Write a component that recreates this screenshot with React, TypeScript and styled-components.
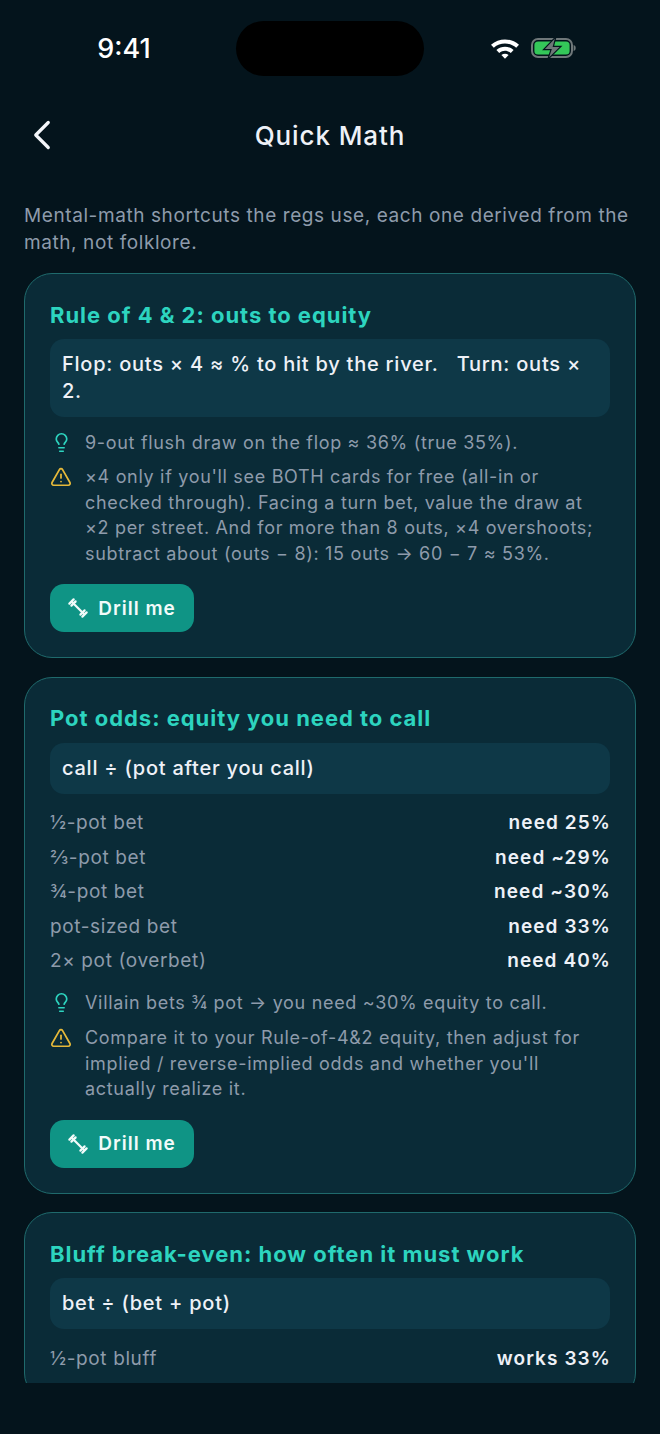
import {FunctionComponent} from 'react'
import styled, {createGlobalStyle} from 'styled-components'
import {ChevronLeft, Lightbulb, TriangleAlert} from 'lucide-react'

const GlobalStyle = createGlobalStyle`
    html, body {
        margin: 0;
        padding: 0;
        background: #03131b;
    }
`

const Screen = styled.div`
    width: 660px;
    height: 1434px;
    background: #04141c;
    font-family: Inter, "Noto Sans", sans-serif;
    overflow: hidden;
    display: flex;
    flex-direction: column;
`

const StatusBar = styled.div`
    height: 97px;
    flex-shrink: 0;
    position: relative;
    display: flex;
    align-items: flex-start;
`

const Time = styled.div`
    width: 248px;
    padding-top: 33px;
    text-align: center;
    color: #ffffff;
    font-size: 27px;
    line-height: 32px;
    font-weight: 500;
`

const Island = styled.div`
    position: absolute;
    left: 236px;
    top: 21px;
    width: 188px;
    height: 55px;
    border-radius: 28px;
    background: #000000;
`

const StatusIcons = styled.div`
    position: absolute;
    left: 490px;
    top: 36px;
    display: flex;
    align-items: center;
    gap: 11px;
`

const Header = styled.div`
    height: 78px;
    flex-shrink: 0;
    position: relative;
    display: flex;
    align-items: center;
    justify-content: center;
`

const BackButton = styled.div`
    position: absolute;
    left: 17px;
    top: 13px;
    color: #f4f6fa;
    display: flex;
`

const Title = styled.h1`
    margin: 0;
    color: #eef1f7;
    font-size: 26px;
    line-height: 32px;
    font-weight: 500;
    letter-spacing: 0.9px;
`

const Scroller = styled.div`
    height: 1208px;
    flex-shrink: 0;
    overflow: hidden;
    padding: 27px 24px 0;
    box-sizing: border-box;
`

const Intro = styled.p`
    margin: 0 0 17px;
    color: #8e9bab;
    font-size: 19px;
    line-height: 27px;
    letter-spacing: 0.59px;
`

const Card = styled.section`
    background: #0a2b37;
    border: 1.5px solid #1f6a6c;
    border-radius: 28px;
    padding: 24.5px 25px 25px;
    margin-bottom: 18.5px;
    box-sizing: border-box;
`

const CardTitle = styled.h2`
    margin: 0 0 8.5px;
    color: #2dd4bf;
    font-size: 22px;
    line-height: 32px;
    font-weight: 700;
    letter-spacing: 0.97px;
`

const Formula = styled.div`
    background: #0e3847;
    border-radius: 14px;
    padding: 12px;
    color: #eef1f7;
    font-size: 20px;
    line-height: 27px;
    font-weight: 500;
    letter-spacing: 0.76px;
    white-space: pre-wrap;
`

const Rows = styled.div`
    margin-top: 11.5px;
`

const Row = styled.div`
    height: 34.5px;
    display: flex;
    align-items: center;
    justify-content: space-between;
    font-size: 19px;
    letter-spacing: 0.62px;
`

const RowLabel = styled.span`
    color: #8e9bab;
`

const RowValue = styled.span`
    color: #eef1f7;
    font-weight: 600;
    letter-spacing: 1.1px;
    margin-right: -1px;
`

const Notes = styled.div`
    margin-top: 12.5px;
    display: flex;
    flex-direction: column;
    gap: 9px;
`

const Note = styled.div`
    display: flex;
    gap: 13px;
    color: #8e9bab;
    font-size: 18px;
    line-height: 25.6px;
    letter-spacing: 0.68px;
`

const NoteIcon = styled.span<{$color: string}>`
    width: 22px;
    height: 25px;
    flex-shrink: 0;
    color: ${p => p.$color};
    display: flex;
    align-items: center;
    justify-content: center;
`

const DrillButton = styled.button`
    margin-top: 18px;
    height: 48px;
    width: 144px;
    border: none;
    border-radius: 14px;
    background: #0f9485;
    color: #f2fbfa;
    font-family: inherit;
    font-size: 19px;
    font-weight: 600;
    letter-spacing: 1px;
    display: flex;
    align-items: center;
    justify-content: center;
    gap: 10px;
    padding: 0;
`

const WifiIcon: FunctionComponent = () => (
    <svg width="30" height="22" viewBox="0 0 30 22">
        <path d="M1 7.8 C9 0.6 21 0.6 29 7.8 L26.2 10.8 C19.8 5.2 10.2 5.2 3.8 10.8Z" fill="#fff"/>
        <path d="M6.4 13 C11.5 8.6 18.5 8.6 23.6 13 L20.8 16 C17.2 13 12.8 13 9.2 16Z" fill="#fff"/>
        <path d="M11.4 18 C13.5 16.3 16.5 16.3 18.6 18 L15 21.8Z" fill="#fff"/>
    </svg>
)

const BatteryIcon: FunctionComponent = () => (
    <svg width="46" height="24" viewBox="0 0 46 24">
        <rect x="1" y="3" width="40" height="18" rx="6" fill="none" stroke="#6f7779" strokeWidth="2"/>
        <rect x="3.4" y="5.4" width="35.2" height="13.2" rx="3.6" fill="#34c759"/>
        <path d="M42.6 9 C45.4 9.6 45.4 14.4 42.6 15Z" fill="#6f7779"/>
        <path d="M25 0.6 L12.5 13.6 L20 13.6 L16.8 23.4 L30 10.4 L22.4 10.4Z" fill="#6f7779" stroke="#04141c" strokeWidth="1.2"/>
    </svg>
)

const DrillIcon: FunctionComponent = () => (
    <svg width="20" height="20" viewBox="0 0 20 20" fill="none" stroke="#f2fbfa" strokeLinecap="round">
        <path d="M4 4 L16 16" strokeWidth="2.2"/>
        <path d="M5.6 1.4 L1.4 5.6" strokeWidth="2.2"/>
        <path d="M7.6 3.4 L3.4 7.6" strokeWidth="2.2"/>
        <path d="M16.6 12.4 L12.4 16.6" strokeWidth="2.2"/>
        <path d="M18.6 14.4 L14.4 18.6" strokeWidth="2.2"/>
    </svg>
)

const Tip: FunctionComponent<{text: string}> = ({text}) => (
    <Note>
        <NoteIcon $color="#2dd4bf"><Lightbulb size={21} strokeWidth={1.9}/></NoteIcon>
        <span>{text}</span>
    </Note>
)

const Warning: FunctionComponent<{text: string}> = ({text}) => (
    <Note>
        <NoteIcon $color="#e6b93a"><TriangleAlert size={22} strokeWidth={1.9}/></NoteIcon>
        <span>{text}</span>
    </Note>
)

const Drill: FunctionComponent = () => (
    <DrillButton>
        <DrillIcon/>
        Drill me
    </DrillButton>
)

const potOdds = [
    ['½-pot bet', 'need 25%'],
    ['⅔-pot bet', 'need ~29%'],
    ['¾-pot bet', 'need ~30%'],
    ['pot-sized bet', 'need 33%'],
    ['2× pot (overbet)', 'need 40%'],
]

const App: FunctionComponent = () => {
    return (
        <Screen>
            <GlobalStyle/>
            <StatusBar>
                <Time>9:41</Time>
                <Island/>
                <StatusIcons>
                    <WifiIcon/>
                    <BatteryIcon/>
                </StatusIcons>
            </StatusBar>
            <Header>
                <BackButton><ChevronLeft size={50} strokeWidth={1.55}/></BackButton>
                <Title>Quick Math</Title>
            </Header>
            <Scroller>
                <Intro>Mental-math shortcuts the regs use, each one derived from the math, not folklore.</Intro>

                <Card>
                    <CardTitle>Rule of 4 &amp; 2: outs to equity</CardTitle>
                    <Formula>{'Flop: outs × 4 ≈ % to hit by the river.   Turn: outs × 2.'}</Formula>
                    <Notes>
                        <Tip text="9-out flush draw on the flop ≈ 36% (true 35%)."/>
                        <Warning text="×4 only if you'll see BOTH cards for free (all-in or checked through). Facing a turn bet, value the draw at ×2 per street. And for more than 8 outs, ×4 overshoots; subtract about (outs − 8): 15 outs → 60 − 7 ≈ 53%."/>
                    </Notes>
                    <Drill/>
                </Card>

                <Card>
                    <CardTitle>Pot odds: equity you need to call</CardTitle>
                    <Formula>call ÷ (pot after you call)</Formula>
                    <Rows>
                        {potOdds.map(([label, value]) => (
                            <Row key={label}>
                                <RowLabel>{label}</RowLabel>
                                <RowValue>{value}</RowValue>
                            </Row>
                        ))}
                    </Rows>
                    <Notes>
                        <Tip text="Villain bets ¾ pot → you need ~30% equity to call."/>
                        <Warning text="Compare it to your Rule-of-4&2 equity, then adjust for implied / reverse-implied odds and whether you'll actually realize it."/>
                    </Notes>
                    <Drill/>
                </Card>

                <Card>
                    <CardTitle>Bluff break-even: how often it must work</CardTitle>
                    <Formula>bet ÷ (bet + pot)</Formula>
                    <Rows>
                        <Row>
                            <RowLabel>½-pot bluff</RowLabel>
                            <RowValue>works 33%</RowValue>
                        </Row>
                    </Rows>
                </Card>
            </Scroller>
        </Screen>
    )
}

export default App
